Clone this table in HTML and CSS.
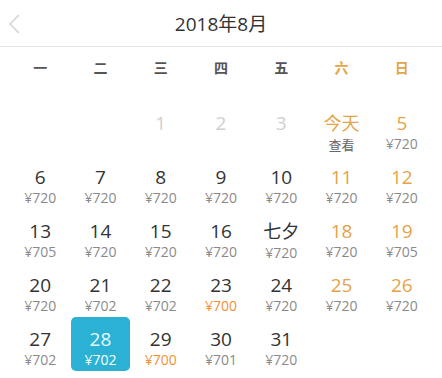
FILE: index.html
```html
<!DOCTYPE html>
<html lang="zh">
<head>
<meta charset="utf-8">
<link rel="stylesheet" href="styles.css">
</head>
<body>
<div class="cal">
  <header class="head">
    <span class="back"><svg width="16" height="22" viewBox="0 0 16 22"><path d="M13 2 L4 11 L13 20" fill="none" stroke="#dcdcdc" stroke-width="1.8"/></svg></span>
    <h1 class="title">2018年8月</h1>
    <span class="spacer"></span>
  </header>
  <div class="week">
    <span>一</span><span>二</span><span>三</span><span>四</span><span>五</span><span class="we">六</span><span class="we">日</span>
  </div>
  <div class="grid">
    <div class="cell"></div><div class="cell"></div>
    <div class="cell off"><b>1</b></div>
    <div class="cell off"><b>2</b></div>
    <div class="cell off"><b>3</b></div>
    <div class="cell wk cjkcell"><b class="cjk">今天</b><i class="dark">查看</i></div>
    <div class="cell wk"><b>5</b><i>¥720</i></div>

    <div class="cell"><b>6</b><i>¥720</i></div>
    <div class="cell"><b>7</b><i>¥720</i></div>
    <div class="cell"><b>8</b><i>¥720</i></div>
    <div class="cell"><b>9</b><i>¥720</i></div>
    <div class="cell"><b>10</b><i>¥720</i></div>
    <div class="cell wk"><b>11</b><i>¥720</i></div>
    <div class="cell wk"><b>12</b><i>¥720</i></div>

    <div class="cell"><b>13</b><i>¥705</i></div>
    <div class="cell"><b>14</b><i>¥720</i></div>
    <div class="cell"><b>15</b><i>¥720</i></div>
    <div class="cell"><b>16</b><i>¥720</i></div>
    <div class="cell cjkcell"><b class="cjk">七夕</b><i>¥720</i></div>
    <div class="cell wk"><b>18</b><i>¥720</i></div>
    <div class="cell wk"><b>19</b><i>¥705</i></div>

    <div class="cell"><b>20</b><i>¥720</i></div>
    <div class="cell"><b>21</b><i>¥702</i></div>
    <div class="cell"><b>22</b><i>¥702</i></div>
    <div class="cell"><b>23</b><i class="low">¥700</i></div>
    <div class="cell"><b>24</b><i>¥720</i></div>
    <div class="cell wk"><b>25</b><i>¥720</i></div>
    <div class="cell wk"><b>26</b><i>¥720</i></div>

    <div class="cell"><b>27</b><i>¥702</i></div>
    <div class="cell sel"><b>28</b><i>¥702</i></div>
    <div class="cell"><b>29</b><i class="low">¥700</i></div>
    <div class="cell"><b>30</b><i>¥701</i></div>
    <div class="cell"><b>31</b><i>¥720</i></div>
    <div class="cell"></div><div class="cell"></div>
  </div>
</div>
</body>
</html>
```

FILE: styles.css
```css
* { box-sizing: border-box; margin: 0; padding: 0; }
html, body { background: #fff; }
body {
  font-family: "Open Sans", "Noto Sans CJK SC", sans-serif;
  color: #333;
  width: 442px;
  height: 378px;
  overflow: hidden;
}
.head {
  height: 47px;
  border-bottom: 1px solid #e4e4e4;
  display: grid;
  grid-template-columns: 40px 1fr 40px;
  align-items: center;
}
.back {
  display: flex;
  align-items: center;
  padding-left: 6px;
  padding-top: 1px;
}
.title {
  text-align: center;
  font-size: 19px;
  font-weight: 400;
  color: #333;
  line-height: 24px;
  padding-top: 1px;
}
.week {
  display: grid;
  grid-template-columns: repeat(7, 1fr);
  padding: 11px 10px 0;
  height: 54px;
  font-family: "Noto Sans CJK SC", sans-serif;
  font-size: 14px;
  font-weight: 700;
  color: #555;
  line-height: 18px;
}
.week span { text-align: center; }
.week .we { color: #e3a547; }
.grid {
  display: grid;
  grid-template-columns: repeat(7, 1fr);
  grid-auto-rows: 54px;
  padding: 0 10px;
}
.cell {
  display: flex;
  flex-direction: column;
  align-items: center;
  padding-top: 10px;
  border-radius: 5px;
}
.cell b {
  font-family: "Open Sans", "Noto Sans CJK SC", sans-serif;
  font-weight: 400;
  font-size: 19px;
  line-height: 24px;
  height: 24px;
  color: #333;
}
.cell.cjkcell { padding-top: 9px; }
.cell b.cjk {
  font-family: "Noto Sans CJK SC", sans-serif;
  font-size: 18px;
  line-height: 24px;
  margin-bottom: 2px;
}
.cell i {
  font-style: normal;
  font-size: 14px;
  line-height: 18px;
  color: #8a8a8a;
}
.cell.off b { color: #cfcfcf; }
.cell.wk b { color: #e6a347; }
.cell i.dark {
  color: #666;
  font-family: "Noto Sans CJK SC", sans-serif;
  font-size: 13px;
  line-height: 18px;
}
.cell i.low { color: #ef9135; }
.cell.sel {
  background: #2ab1d3;
  margin: 0 1px;
}
.cell.sel b { color: #e3fbff; }
.cell.sel i { color: #fff; }
```
